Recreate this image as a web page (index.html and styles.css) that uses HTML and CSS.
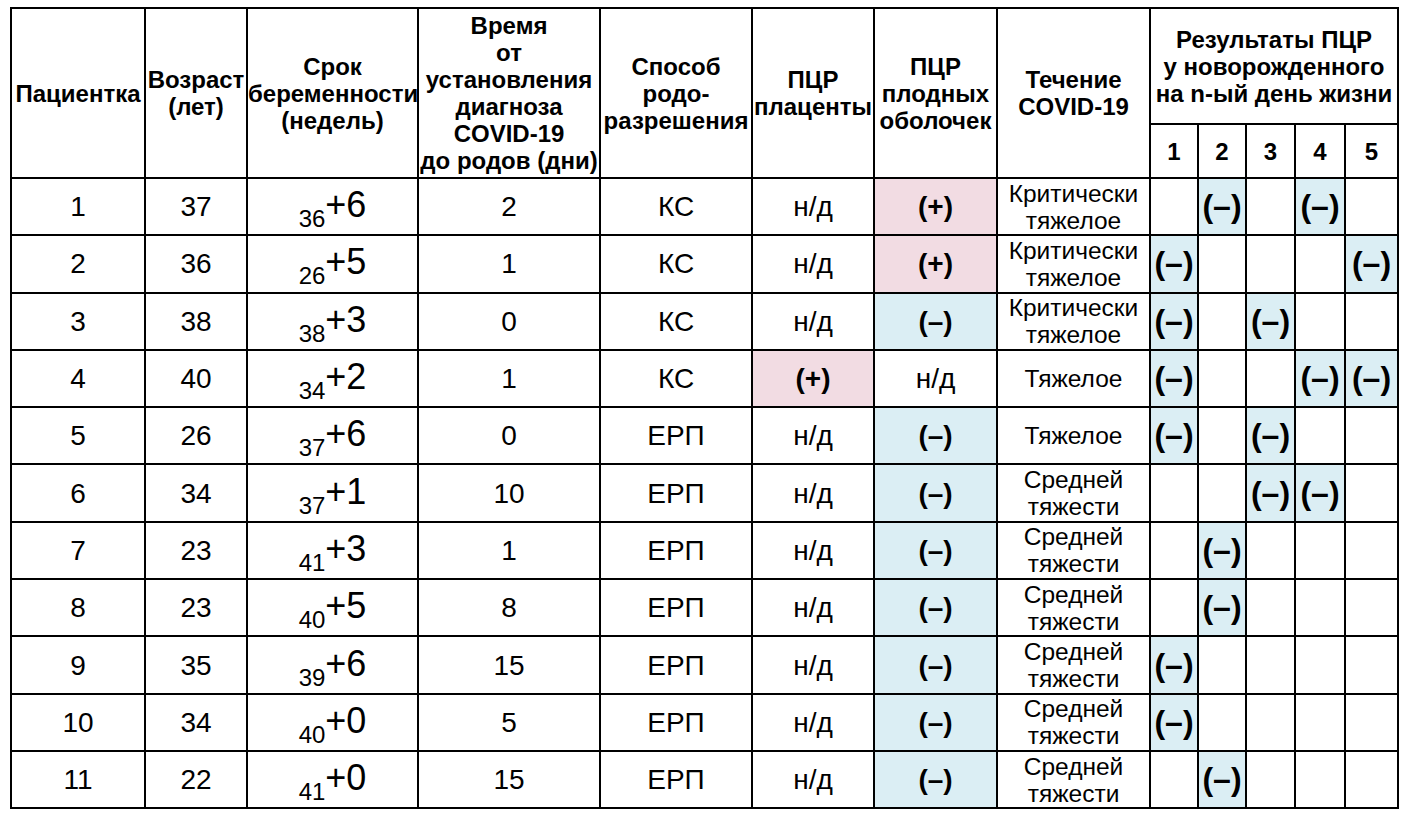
FILE: index.html
```html
<!DOCTYPE html>
<html lang="ru">
<head>
<meta charset="utf-8">
<link rel="stylesheet" href="styles.css">
</head>
<body>
<table class="tbl">
  <colgroup>
    <col class="c1"><col class="c2"><col class="c3"><col class="c4"><col class="c5"><col class="c6"><col class="c7"><col class="c8">
    <col class="d1"><col class="d2"><col class="d3"><col class="d4"><col class="d5">
  </colgroup>
  <thead>
    <tr class="h1">
      <th rowspan="2">Пациентка</th>
      <th rowspan="2">Возраст<br>(лет)</th>
      <th rowspan="2">Срок<br>беременности<br>(недель)</th>
      <th rowspan="2" class="top">Время<br>от<br>установления<br>диагноза<br>COVID-19<br>до родов (дни)</th>
      <th rowspan="2">Способ<br>родо-<br>разрешения</th>
      <th rowspan="2">ПЦР<br>плаценты</th>
      <th rowspan="2">ПЦР<br>плодных<br>оболочек</th>
      <th rowspan="2">Течение<br>COVID-19</th>
      <th colspan="5">Результаты ПЦР<br>у новорожденного<br>на n-ый день жизни</th>
    </tr>
    <tr class="h2">
      <th>1</th><th>2</th><th>3</th><th>4</th><th>5</th>
    </tr>
  </thead>
  <tbody>
    <tr>
      <td>1</td><td>37</td><td><span class="wk">36</span><span class="pl">+6</span></td><td>2</td><td>КС</td><td>н/д</td><td class="pos">(+)</td><td class="crs">Критически<br>тяжелое</td>
      <td></td><td class="neg d">(–)</td><td></td><td class="neg d">(–)</td><td></td>
    </tr>
    <tr>
      <td>2</td><td>36</td><td><span class="wk">26</span><span class="pl">+5</span></td><td>1</td><td>КС</td><td>н/д</td><td class="pos">(+)</td><td class="crs">Критически<br>тяжелое</td>
      <td class="neg d">(–)</td><td></td><td></td><td></td><td class="neg d">(–)</td>
    </tr>
    <tr>
      <td>3</td><td>38</td><td><span class="wk">38</span><span class="pl">+3</span></td><td>0</td><td>КС</td><td>н/д</td><td class="neg">(–)</td><td class="crs">Критически<br>тяжелое</td>
      <td class="neg d">(–)</td><td></td><td class="neg d">(–)</td><td></td><td></td>
    </tr>
    <tr>
      <td>4</td><td>40</td><td><span class="wk">34</span><span class="pl">+2</span></td><td>1</td><td>КС</td><td class="pos">(+)</td><td>н/д</td><td class="crs">Тяжелое</td>
      <td class="neg d">(–)</td><td></td><td></td><td class="neg d">(–)</td><td class="neg d">(–)</td>
    </tr>
    <tr>
      <td>5</td><td>26</td><td><span class="wk">37</span><span class="pl">+6</span></td><td>0</td><td>ЕРП</td><td>н/д</td><td class="neg">(–)</td><td class="crs">Тяжелое</td>
      <td class="neg d">(–)</td><td></td><td class="neg d">(–)</td><td></td><td></td>
    </tr>
    <tr>
      <td>6</td><td>34</td><td><span class="wk">37</span><span class="pl">+1</span></td><td>10</td><td>ЕРП</td><td>н/д</td><td class="neg">(–)</td><td class="crs">Средней<br>тяжести</td>
      <td></td><td></td><td class="neg d">(–)</td><td class="neg d">(–)</td><td></td>
    </tr>
    <tr>
      <td>7</td><td>23</td><td><span class="wk">41</span><span class="pl">+3</span></td><td>1</td><td>ЕРП</td><td>н/д</td><td class="neg">(–)</td><td class="crs">Средней<br>тяжести</td>
      <td></td><td class="neg d">(–)</td><td></td><td></td><td></td>
    </tr>
    <tr>
      <td>8</td><td>23</td><td><span class="wk">40</span><span class="pl">+5</span></td><td>8</td><td>ЕРП</td><td>н/д</td><td class="neg">(–)</td><td class="crs">Средней<br>тяжести</td>
      <td></td><td class="neg d">(–)</td><td></td><td></td><td></td>
    </tr>
    <tr>
      <td>9</td><td>35</td><td><span class="wk">39</span><span class="pl">+6</span></td><td>15</td><td>ЕРП</td><td>н/д</td><td class="neg">(–)</td><td class="crs">Средней<br>тяжести</td>
      <td class="neg d">(–)</td><td></td><td></td><td></td><td></td>
    </tr>
    <tr>
      <td>10</td><td>34</td><td><span class="wk">40</span><span class="pl">+0</span></td><td>5</td><td>ЕРП</td><td>н/д</td><td class="neg">(–)</td><td class="crs">Средней<br>тяжести</td>
      <td class="neg d">(–)</td><td></td><td></td><td></td><td></td>
    </tr>
    <tr>
      <td>11</td><td>22</td><td><span class="wk">41</span><span class="pl">+0</span></td><td>15</td><td>ЕРП</td><td>н/д</td><td class="neg">(–)</td><td class="crs">Средней<br>тяжести</td>
      <td></td><td class="neg d">(–)</td><td></td><td></td><td></td>
    </tr>
  </tbody>
</table>
</body>
</html>
```

FILE: styles.css
```css
html, body {
  margin: 0;
  padding: 0;
  background: #ffffff;
}
body {
  padding: 7px 0 0 10px;
  font-family: "Liberation Sans", Arial, sans-serif;
  color: #000;
}
.tbl {
  border-collapse: collapse;
  table-layout: fixed;
  width: 1389px;
}
.c1 { width: 134px; }
.c2 { width: 102px; }
.c3 { width: 171px; }
.c4 { width: 182px; }
.c5 { width: 152px; }
.c6 { width: 122px; }
.c7 { width: 123px; }
.c8 { width: 153px; }
.d1 { width: 48px; }
.d2 { width: 48px; }
.d3 { width: 49px; }
.d4 { width: 50px; }
.d5 { width: 53px; }
.tbl th, .tbl td {
  border: 2px solid #000;
  padding: 0;
  text-align: center;
  vertical-align: middle;
  overflow: visible;
  white-space: nowrap;
}
.tbl th {
  font-weight: bold;
  font-size: 24px;
  line-height: 27px;
}
.h1 { height: 116px; }
.h2 { height: 54px; }
.tbl td {
  font-size: 28px;
  line-height: 27px;
  height: 55.3px;
}
.pos {
  background: #f2dce3;
  font-weight: bold;
}
.neg {
  background: #dbeef4;
  font-weight: bold;
}
.tbl td.d {
  font-size: 32px;
}
.tbl td.crs {
  font-size: 24.5px;
  line-height: 27px;
}
.wk {
  font-size: 24px;
  position: relative;
  top: 10px;
}
.pl {
  font-size: 36px;
}
```
